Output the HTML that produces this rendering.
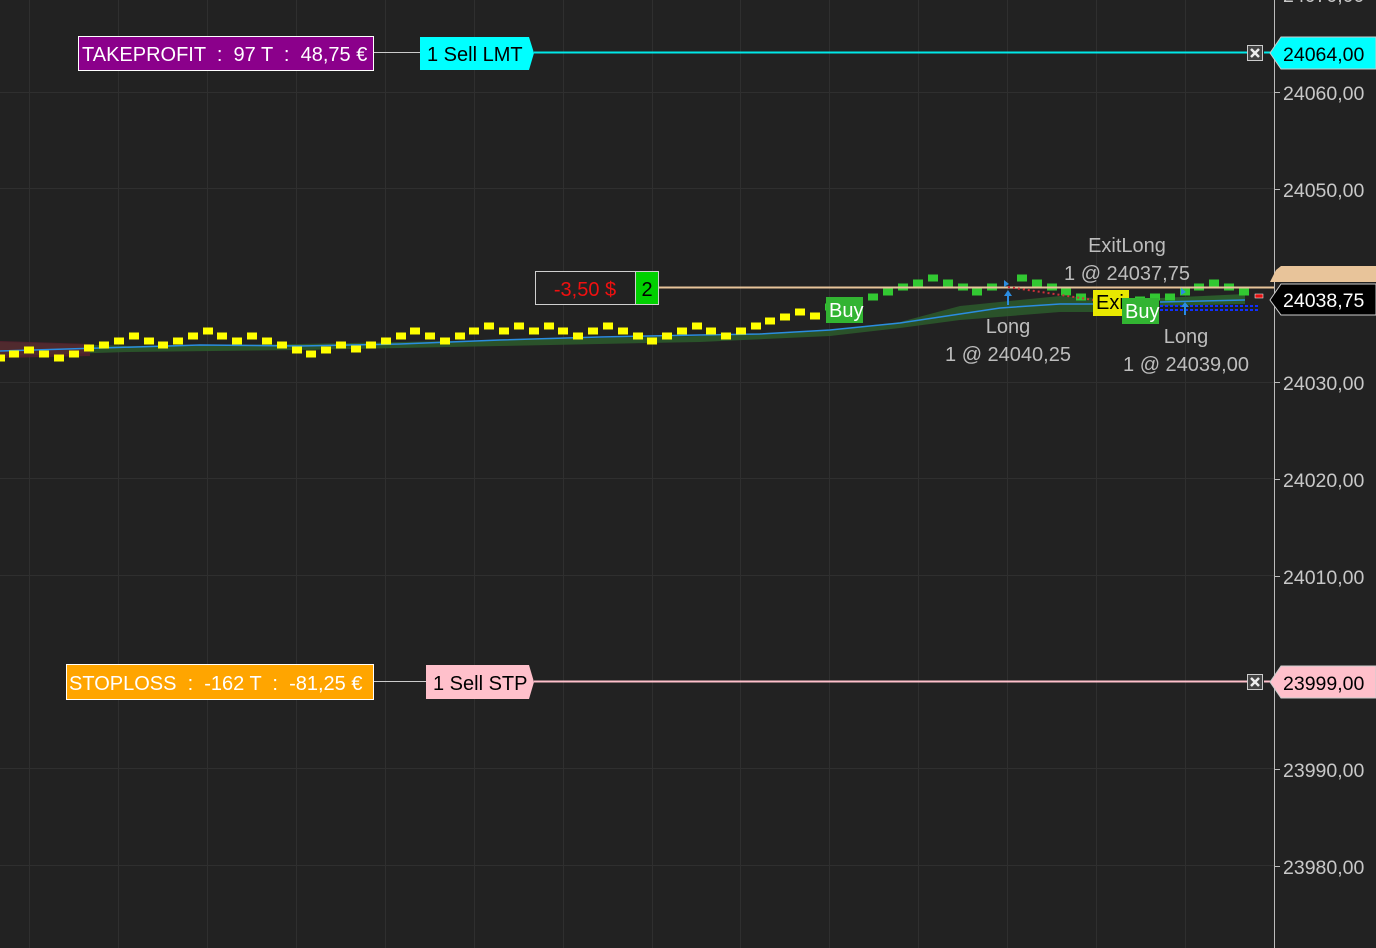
<!DOCTYPE html>
<html><head><meta charset="utf-8"><style>
html,body{margin:0;padding:0;background:#222;overflow:hidden}
svg{display:block;font-family:"Liberation Sans",sans-serif}
.pre{white-space:pre}
</style></head><body>
<svg id="s" width="1376" height="948" viewBox="0 0 1376 948" xmlns="http://www.w3.org/2000/svg">
<rect width="1376" height="948" fill="#222"/>
<g stroke="#2f2f2f" stroke-width="1">
<line x1="29.5" y1="0" x2="29.5" y2="948"/><line x1="118.5" y1="0" x2="118.5" y2="948"/><line x1="207.5" y1="0" x2="207.5" y2="948"/><line x1="296.5" y1="0" x2="296.5" y2="948"/><line x1="385.5" y1="0" x2="385.5" y2="948"/><line x1="474.5" y1="0" x2="474.5" y2="948"/><line x1="563.5" y1="0" x2="563.5" y2="948"/><line x1="652.5" y1="0" x2="652.5" y2="948"/><line x1="740.5" y1="0" x2="740.5" y2="948"/><line x1="829.5" y1="0" x2="829.5" y2="948"/><line x1="918.5" y1="0" x2="918.5" y2="948"/><line x1="1007.5" y1="0" x2="1007.5" y2="948"/><line x1="1096.5" y1="0" x2="1096.5" y2="948"/><line x1="1185.5" y1="0" x2="1185.5" y2="948"/>
<line x1="0" y1="92.5" x2="1274" y2="92.5"/><line x1="0" y1="188.5" x2="1274" y2="188.5"/><line x1="0" y1="382.5" x2="1274" y2="382.5"/><line x1="0" y1="478.5" x2="1274" y2="478.5"/><line x1="0" y1="575.5" x2="1274" y2="575.5"/><line x1="0" y1="768.5" x2="1274" y2="768.5"/><line x1="0" y1="865.5" x2="1274" y2="865.5"/>
</g>
<path d="M0,342 L130,346 L300,344 L500,340 L700,336 L830,330 L900,322 L960,306 L1060,296 L1096,298 L1096,312 L1060,312 L960,320 L900,328 L830,336 L700,342 L500,346 L300,350 L130,352 L0,356Z" fill="#2b5a2b" opacity="0.85"/>
<path d="M0,341 L90,344 L90,356 L0,358Z" fill="#5a2030" opacity="0.8"/>
<path d="M1160,298 L1245,294 L1245,304 L1160,306Z" fill="#2b5a2b"/>
<polyline points="0,351 100,348 200,345 300,346 400,344 500,340 600,337 700,335 760,334 830,330 900,323 960,314 1000,308 1060,304 1096,304" fill="none" stroke="#2b8ce0" stroke-width="1.5"/>
<polyline points="1160,302 1245,300" fill="none" stroke="#2b8ce0" stroke-width="1.5"/>
<g id="dots"></g>
<line x1="659" y1="287.5" x2="1274" y2="287.5" stroke="#e8c49a" stroke-width="2"/>
<line x1="1008" y1="287" x2="1094" y2="300" stroke="#d0303a" stroke-width="2" stroke-dasharray="2,3"/>
<line x1="1160" y1="306" x2="1258" y2="306" stroke="#1030ff" stroke-width="2" stroke-dasharray="3,2"/>
<line x1="1160" y1="310" x2="1258" y2="310" stroke="#1030ff" stroke-width="2" stroke-dasharray="3,2"/>
<rect x="1255" y="294" width="8" height="4" fill="#e01010" stroke="#fff" stroke-width="0.5"/>
<g fill="#2b8ce0"><path d="M1008,290 l-4,6 h3 v9 h2 v-9 h3z"/><path d="M1185,302 l-4,5 h3 v8 h2 v-8 h3z"/><path d="M1004,280 v7 l5,-3z"/><path d="M1181,288 v7 l5,-3z"/></g>
<g font-size="20">
<rect x="826" y="297" width="37" height="26" fill="#32b432"/><text x="829" y="317" fill="#fff">Buy</text>
<rect x="1093" y="290" width="36" height="26" fill="#e8e800"/><text x="1096" y="309" fill="#000">Exi</text>
<rect x="1122" y="298" width="37" height="26" fill="#32b432"/><text x="1125" y="318" fill="#fff">Buy</text>
<g fill="#bdbdbd" text-anchor="middle"><text x="1127" y="252">ExitLong</text><text x="1127" y="280">1 @ 24037,75</text><text x="1008" y="333">Long</text><text x="1008" y="361">1 @ 24040,25</text><text x="1186" y="343">Long</text><text x="1186" y="371">1 @ 24039,00</text></g>
<rect x="535.5" y="271.5" width="100" height="33" fill="#222" stroke="#cfcfcf"/><text x="585" y="296" fill="#f01010" text-anchor="middle">-3,50 $</text>
<rect x="635.5" y="271.5" width="23" height="33" fill="#00d000" stroke="#cfcfcf"/><text x="647" y="296" fill="#000" text-anchor="middle">2</text>
<line x1="374" y1="52.5" x2="420" y2="52.5" stroke="#ccc"/>
<rect x="78.5" y="36.5" width="295" height="34" fill="#8b008b" stroke="#fff"/><text class="pre" x="82" y="61" fill="#fff">TAKEPROFIT  :  97 T  :  48,75 €</text>
<path d="M420,37 H529 L534,53 L529,70 H420Z" fill="#00ffff"/><text x="427" y="61" fill="#000">1 Sell LMT</text>
<line x1="534" y1="52.5" x2="1247" y2="52.5" stroke="#00e8e8" stroke-width="2"/><line x1="1264" y1="52.5" x2="1272" y2="52.5" stroke="#00e8e8" stroke-width="2"/>
<rect x="1247.5" y="45.5" width="15" height="15" fill="#444" stroke="#ccc"/><path d="M1251,49 l8,8 M1259,49 l-8,8" stroke="#eee" stroke-width="2.5"/>
<line x1="374" y1="681.5" x2="426" y2="681.5" stroke="#ccc"/>
<rect x="66.5" y="664.5" width="307" height="35" fill="#ffa500" stroke="#fff"/><text class="pre" x="69" y="690" fill="#fff">STOPLOSS  :  -162 T  :  -81,25 €</text>
<path d="M426,665 H529 L534,682 L529,699 H426Z" fill="#ffc0cb"/><text x="433" y="690" fill="#000">1 Sell STP</text>
<line x1="534" y1="681.5" x2="1247" y2="681.5" stroke="#ffc0cb" stroke-width="2"/><line x1="1264" y1="681.5" x2="1272" y2="681.5" stroke="#ffc0cb" stroke-width="2"/>
<rect x="1247.5" y="674.5" width="15" height="15" fill="#444" stroke="#ccc"/><path d="M1251,678 l8,8 M1259,678 l-8,8" stroke="#eee" stroke-width="2.5"/>
</g>
<line x1="1274.5" y1="0" x2="1274.5" y2="948" stroke="#bbb"/>
<g stroke="#bbb"><line x1="1274" y1="92.5" x2="1280" y2="92.5"/><line x1="1274" y1="189.5" x2="1280" y2="189.5"/><line x1="1274" y1="382.5" x2="1280" y2="382.5"/><line x1="1274" y1="479.5" x2="1280" y2="479.5"/><line x1="1274" y1="576.5" x2="1280" y2="576.5"/><line x1="1274" y1="769.5" x2="1280" y2="769.5"/><line x1="1274" y1="866.5" x2="1280" y2="866.5"/></g>
<g font-size="19.5" fill="#c8c8c8"><text x="1283" y="2">24070,00</text><text x="1283" y="100">24060,00</text><text x="1283" y="197">24050,00</text><text x="1283" y="390">24030,00</text><text x="1283" y="487">24020,00</text><text x="1283" y="584">24010,00</text><text x="1283" y="777">23990,00</text><text x="1283" y="874">23980,00</text></g>
<path d="M1276,270 L1281,266 H1376 V282 H1270Z" fill="#e8c49a"/>
<path d="M1281,284 H1376 V315 H1281 L1270,300Z" fill="#000" stroke="#ccc"/><text x="1283" y="307" font-size="19.5" fill="#fff">24038,75</text>
<path d="M1281,37 H1376 V69 H1281 L1270,53Z" fill="#00ffff" stroke="#ccc"/><text x="1283" y="61" font-size="19.5" fill="#000">24064,00</text>
<path d="M1281,666 H1376 V698 H1281 L1270,682Z" fill="#ffc0cb" stroke="#ccc"/><text x="1283" y="690" font-size="19.5" fill="#000">23999,00</text>
</svg>
<script>
var d=[[0,358],[14,354],[29,350],[44,354],[59,358],[74,354],[89,348],[104,345],[119,341],[134,336],[149,341],[163,345],[178,341],[193,336],[208,331],[222,336],[237,341],[252,336],[267,341],[282,345],[297,350],[311,354],[326,350],[341,345],[356,349],[371,345],[386,341],[401,336],[415,331],[430,336],[445,341],[460,336],[474,331],[489,326],[504,331],[519,326],[534,331],[549,326],[563,331],[578,336],[593,331],[608,326],[623,331],[638,336],[652,341],[667,336],[682,331],[697,326],[711,331],[726,336],[741,331],[756,326],[770,321],[785,317],[800,312],[815,316]];
var g=[[830,307],[858,302],[873,297],[888,292],[903,287],[918,283],[933,278],[948,283],[963,287],[977,292],[992,287],[1022,278],[1037,283],[1052,287],[1066,292],[1081,297],[1140,300],[1155,297],[1170,297],[1185,292],[1199,287],[1214,283],[1229,287],[1244,292]];
var h='';d.forEach(function(p){h+='<rect x="'+(p[0]-5)+'" y="'+(p[1]-3.5)+'" width="10" height="7" fill="#ffff00"/>';});
g.forEach(function(p){h+='<rect x="'+(p[0]-5)+'" y="'+(p[1]-3.5)+'" width="10" height="7" fill="#32c832"/>';});
document.getElementById('dots').innerHTML=h;
</script>
</body></html>
